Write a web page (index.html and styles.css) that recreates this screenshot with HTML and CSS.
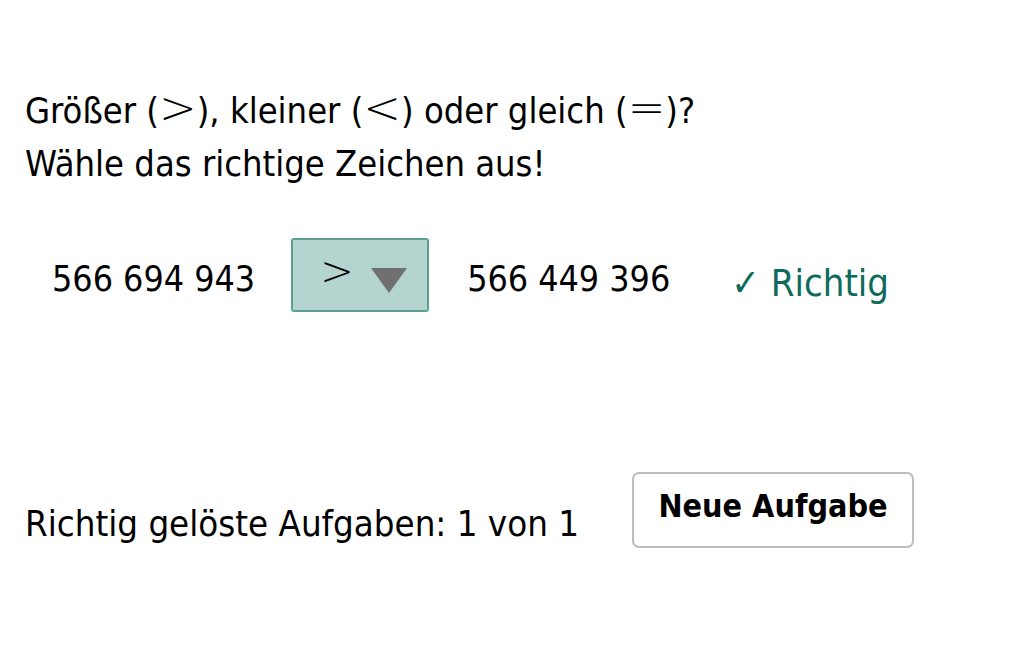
FILE: index.html
```html
<!DOCTYPE html>
<html lang="de">
<head>
    <meta charset="UTF-8">
    <title>Größer, kleiner oder gleich</title>
    <link rel="stylesheet" href="styles.css">
</head>
<body>
    <div class="task">
        <p class="question">Größer (<span class="op">&gt;</span>), kleiner (<span class="op">&lt;</span>) oder gleich (<span class="op">=</span>)?<br>Wähle das richtige Zeichen aus!</p>

        <div class="compare">
            <span class="number">566 694 943</span>
            <div class="select">
                <span class="op">&gt;</span>
                <span class="arrow"></span>
            </div>
            <span class="number">566 449 396</span>
            <span class="result">✓ Richtig</span>
        </div>

        <div class="footer-row">
            <span class="score">Richtig gelöste Aufgaben: 1 von 1</span>
            <button class="new-task">Neue Aufgabe</button>
        </div>
    </div>
</body>
</html>
```

FILE: styles.css
```css
* {
    margin: 0;
    padding: 0;
    box-sizing: border-box;
}

body {
    background: #ffffff;
    color: #000;
    font-family: 'DejaVu Sans Condensed', 'Liberation Sans Narrow', 'Liberation Sans', sans-serif;
    font-stretch: condensed;
}

.task {
    padding: 84px 0 0 25px;
}

.question {
    font-size: 36px;
    line-height: 53px;
}

.question .op {
    font-size: 1.25em;
}

.op {
    font-family: 'DejaVu Sans', sans-serif;
    font-stretch: normal;
    font-weight: 200;
    line-height: 1;
}

.compare {
    display: flex;
    align-items: center;
    margin-top: 48px;
    padding-left: 27px;
    height: 74px;
}

.number {
    font-size: 35.5px;
    margin-top: 6px;
}

.select {
    display: flex;
    align-items: center;
    width: 138px;
    height: 74px;
    margin: 0 38px 0 36px;
    padding: 0 18px 8px 27px;
    background: #b3d4cf;
    border: 2px solid #5d9f95;
    border-radius: 3px;
    font-size: 40px;
}

.arrow {
    margin-left: 17px;
    margin-top: 18px;
    border-left: 18px solid transparent;
    border-right: 18px solid transparent;
    border-top: 25px solid #707070;
}

.result {
    margin-left: 61px;
    margin-top: 16px;
    font-size: 38px;
    color: #0e6b5c;
}

.footer-row {
    display: flex;
    align-items: center;
    margin-top: 160px;
}

.score {
    font-size: 36.3px;
    margin-top: 26px;
}

.new-task {
    margin-left: 53px;
    width: 282px;
    height: 76px;
    padding-bottom: 8px;
    background: #fff;
    border: 2px solid #bdbdbd;
    border-radius: 7px;
    font-family: inherit;
    font-stretch: condensed;
    font-size: 32px;
    font-weight: bold;
    color: #000;
}
```
